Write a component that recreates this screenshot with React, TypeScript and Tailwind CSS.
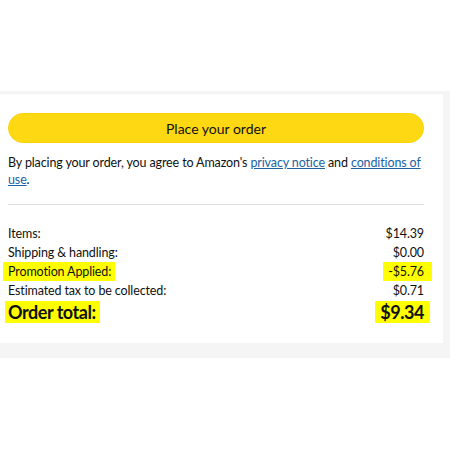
export default function App() {
  const rows = [
    { label: "Items:", value: "$14.39" },
    { label: "Shipping & handling:", value: "$0.00" },
    { label: "Promotion Applied:", value: "-$5.76", mark: true },
    { label: "Estimated tax to be collected:", value: "$0.71" },
  ];

  return (
    <div className="w-[450px] h-[450px] bg-white text-[#0f1111] font-['Lato',sans-serif]">
      <div className="h-[91px]" />
      <div className="bg-[#f5f5f5] pt-[3px] pb-[15px] pr-[7px]">
        <div className="bg-white pl-[8px] pr-[19px] pt-[19px] pb-[20px]">
          <button className="w-full h-[30px] rounded-full bg-[#ffd814] border border-[#fcd200] text-[14px] text-[#0f1111]">
            Place your order
          </button>

          <p className="mt-[11px] text-[12.5px] leading-[17px] tracking-[-0.01em]">
            By placing your order, you agree to Amazon's{" "}
            <a className="text-[#2162a1] underline">privacy notice</a> and{" "}
            <a className="text-[#2162a1] underline">conditions of use</a>.
          </p>

          <div className="mt-[16px] h-px bg-[#dddddd]" />

          <div className="mt-[19px] text-[12.5px] leading-[19px] tracking-[-0.01em]">
            {rows.map((r) => (
              <div key={r.label} className="flex justify-between">
                <span className={r.mark ? "bg-[#ffff00] -ml-[5px] pl-[5px] pr-[4px]" : ""}>{r.label}</span>
                <span className={r.mark ? "bg-[#ffff00] -mr-[8px] pl-[5px] pr-[8px]" : ""}>{r.value}</span>
              </div>
            ))}
            <div className="flex justify-between items-center mt-[1px] text-[18px] leading-[22px] font-bold tracking-[-0.025em]">
              <span className="bg-[#ffff00] -ml-[3px] pl-[3px] pr-[4px]">Order total:</span>
              <span className="bg-[#ffff00] -mr-[6px] pl-[5px] pr-[6px]">$9.34</span>
            </div>
          </div>
        </div>
      </div>
    </div>
  );
}
